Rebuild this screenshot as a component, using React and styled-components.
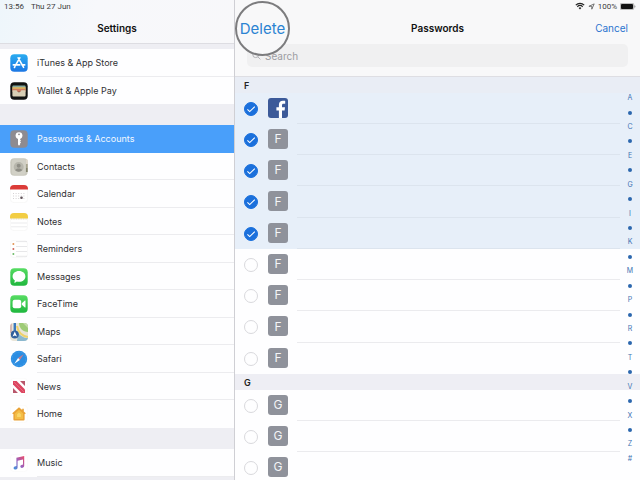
import React, { useState } from "react";
import styled, { createGlobalStyle, css } from "styled-components";

const GlobalStyle = createGlobalStyle`
  * { box-sizing: border-box; }
  body {
    margin: 0;
    font-family: Inter, "Liberation Sans", sans-serif;
    font-size: 10px;
    color: #111;
    background: #fefeff;
  }
  button, input { font: inherit; }
`;

const Screen = styled.div`
  display: grid;
  grid-template-columns: minmax(200px, 235px) 1fr;
  height: 100vh;
  overflow: hidden;
`;

const Sidebar = styled.aside`
  display: flex;
  flex-direction: column;
  min-width: 0;
  overflow: hidden;
  border-right: 1px solid #cfcfd4;
  background: #eeeef3;
`;

const SidebarHeader = styled.header`
  flex: none;
  height: 44px;
  margin-bottom: 5px;
  border-bottom: 1px solid #dddde2;
  background: linear-gradient(105deg, #eef6fb 0, #f7f8fb 40%, #f8f8fa 100%);
`;

const StatusBar = styled.div`
  display: flex;
  align-items: center;
  justify-content: ${(p) => (p.$end ? "flex-end" : "flex-start")};
  gap: ${(p) => (p.$end ? 3 : 7)}px;
  height: 12px;
  padding: 0 4px;
  font-family: Roboto, "Liberation Sans", sans-serif;
  font-size: 8px;
  color: #3c3d40;
`;

const Title = styled.h1`
  margin: 0;
  font-size: 10px;
  line-height: 32px;
  font-weight: 600;
  text-align: center;
  color: #111;
`;

const Group = styled.nav`
  display: flex;
  flex: none;
  flex-direction: column;
  margin-bottom: 21px;
  background: #fefeff;
`;

const Setting = styled.a`
  display: flex;
  align-items: center;
  gap: 9px;
  height: 27px;
  padding-left: 10px;
  font-size: 9px;
  color: ${(p) => (p.$active ? "#f4f9ff" : "#303033")};
  background: ${(p) => (p.$active ? "#499ffa" : "transparent")};
  text-decoration: none;

  &:nth-child(odd) { height: 28px; }
  svg { flex: none; }
`;

const SettingLabel = styled.span`
  flex: 1;
  align-self: stretch;
  display: flex;
  align-items: center;
  border-bottom: 1px solid ${(p) => (p.$active ? "transparent" : "#ececef")};

  ${Setting}:last-child:not(:first-child) & { border-color: transparent; }
`;

const Main = styled.main`
  display: flex;
  flex-direction: column;
  min-width: 0;
  overflow: hidden;
`;

const MainHeader = styled.header`
  flex: none;
  height: 77px;
  border-bottom: 1px solid #dedee3;
  background: #f8f8f9;
`;

const Toolbar = styled.div`
  display: grid;
  grid-template-columns: 1fr auto 1fr;
  align-items: center;
  height: 32px;
`;

const CancelButton = styled.button`
  justify-self: end;
  margin-right: 12px;
  padding: 0;
  border: 0;
  background: none;
  color: #2a74cf;
`;

const DeleteSlot = styled.div`
  position: relative;
  align-self: stretch;
`;

const DeleteButton = styled.button`
  position: absolute;
  top: -11px;
  left: 0;
  display: grid;
  place-items: center;
  width: 55px;
  height: 55px;
  padding: 0;
  border: 2px solid #7c7c7e;
  border-radius: 50%;
  background: #f8f8f9;
  color: #2b83d2;
  font-size: 15px;
`;

const SearchBox = styled.label`
  display: flex;
  align-items: center;
  gap: 4px;
  height: 23px;
  margin: 0 12px;
  padding-left: 5px;
  border-radius: 5px;
  background: #f0f0f1;
  color: #b4b4b8;
`;

const SearchInput = styled.input`
  flex: 1;
  min-width: 0;
  padding: 0;
  border: 0;
  outline: 0;
  background: none;
  color: #333;
  &::placeholder { color: #9c9ca1; opacity: 1; }
`;

const ListArea = styled.div`
  position: relative;
  flex: 1;
  min-height: 0;
  overflow: hidden;
`;

const SectionTitle = styled.h2`
  height: 16px;
  margin: 0;
  padding-left: 9px;
  font-size: 9px;
  line-height: 17px;
  font-weight: 600;
  color: #222;
  background: ${(p) => (p.$tinted ? "#e9edf5" : "#eeeef4")};
`;

const Rows = styled.ul`
  margin: 0;
  padding: 0;
  list-style: none;
`;

const Row = styled.li`
  display: flex;
  align-items: center;
  height: 31px;
  padding: 0 20px 0 9px;
  background: ${(p) => (p.$selected ? "#e7eff9" : "#fefeff")};
  &:nth-child(4n) { height: 32px; }
`;

const Check = styled.input`
  appearance: none;
  flex: none;
  width: 14px;
  height: 14px;
  margin: 0 10px 0 0;
  border: 1px solid #d9d9dd;
  border-radius: 50%;
  background: #fefeff;

  &:checked {
    border-color: #1b70dc;
    background: #1b70dc
      url("data:image/svg+xml,%3Csvg xmlns='http://www.w3.org/2000/svg' viewBox='0 0 12 12'%3E%3Cpath d='M2.4 6.4l2.3 2.2L9.8 3.6' fill='none' stroke='white' stroke-width='1.1'/%3E%3C/svg%3E")
      center / 12px no-repeat;
  }
`;

const Badge = styled.span`
  flex: none;
  display: grid;
  place-items: center;
  width: 20px;
  height: 20px;
  margin: 0 9px 2px 0;
  border-radius: 3px;
  background: #8f929b;
  color: #f4f5f7;
  font-size: 12px;
`;

const FacebookBadge = styled.svg`
  flex: none;
  width: 20px;
  height: 20px;
  margin: 0 9px 2px 0;
`;

const Line = styled.span`
  flex: 1;
  align-self: stretch;
  border-bottom: 1px solid ${(p) => (p.$selected ? "#dce4ee" : "#ebebee")};

  ${Row}:last-child & { border-color: transparent; }
`;

const IndexBar = styled.nav`
  position: absolute;
  top: 14px;
  right: 4px;
  display: grid;
  grid-auto-rows: 1fr;
  width: 12px;
  height: 375px;
`;

const IndexLink = styled.a`
  display: grid;
  place-items: center;
  color: #3f73b3;
  font-size: 7px;
  line-height: 8px;
  text-decoration: none;
  ${(p) =>
    p.$dot &&
    css`
      &::before {
        content: "";
        width: 4px;
        height: 4px;
        border-radius: 50%;
        background: #2c67ae;
      }
    `}
`;

const Icon = ({ children }) => (
  <svg width="18" height="18" viewBox="0 0 18 18" aria-hidden="true">
    {children}
  </svg>
);

const Tile = ({ fill, stroke }) => (
  <rect x="0.3" y="0.3" width="17.4" height="17.4" rx="4" fill={fill} stroke={stroke} strokeWidth="0.5" />
);

const GreenTile = ({ id }) => (
  <>
    <defs>
      <linearGradient id={id} x2="0" y2="1">
        <stop stopColor="#57dc63" />
        <stop offset="1" stopColor="#1fb73e" />
      </linearGradient>
    </defs>
    <Tile fill={`url(#${id})`} />
  </>
);

const icons = {
  store: (
    <Icon>
      <defs>
        <linearGradient id="store-blue" x2="0" y2="1">
          <stop stopColor="#29abf0" />
          <stop offset="1" stopColor="#1d77e4" />
        </linearGradient>
      </defs>
      <Tile fill="url(#store-blue)" />
      <path d="M9.8 3.8 5.3 11.6M8.2 3.8l5.4 9.6M3.3 10.9h6.4M12 10.9h2.7M4.9 12.6l-.5.9" stroke="#fff" strokeWidth="1.6" strokeLinecap="round" fill="none" />
    </Icon>
  ),
  wallet: (
    <Icon>
      <Tile fill="#111211" />
      <rect x="2.4" y="3.4" width="13.2" height="4" rx="1" fill="#86a99e" />
      <rect x="2.4" y="5.2" width="13.2" height="3" fill="#dfb65d" />
      <rect x="2.4" y="6.8" width="13.2" height="3" fill="#cf7c61" />
      <path d="M2.4 8.2h4c.6 0 .8 2 2.6 2s2-2 2.6-2h4v5.2a1 1 0 0 1-1 1H3.4a1 1 0 0 1-1-1z" fill="#d8cfb5" />
    </Icon>
  ),
  key: (
    <Icon>
      <Tile fill="#8e8b90" />
      <circle cx="9" cy="5.6" r="3.4" fill="#fff" />
      <circle cx="9" cy="4.3" r="0.9" fill="#8e8b90" />
      <path d="M8 8h2.1v1.5l.9.9-.9 1 .9 1-.9 1v1.2L9 15.8l-1-1.2z" fill="#fff" />
    </Icon>
  ),
  contacts: (
    <Icon>
      <Tile fill="#c9c8bd" />
      <path d="M15.7 1.2h1a1 1 0 0 1 1 1V6h-2z" fill="#ded7ca" />
      <path d="M15.9 6h1.8v4h-1.8z" fill="#a7a48e" />
      <path d="M15.9 10h1.8v4h-1.8z" fill="#84846e" />
      <rect x="2" y="1.2" width="13.6" height="15.6" rx="2" fill="#d1d0c6" />
      <circle cx="8.7" cy="9" r="5" fill="#b7b6ac" />
      <circle cx="8.7" cy="7.7" r="2" fill="#8f8e86" />
      <path d="M5.2 12.1c.8-2.1 6.2-2.1 7 0-1.7 2.1-5.3 2.1-7 0" fill="#8f8e86" />
    </Icon>
  ),
  calendar: (
    <Icon>
      <Tile fill="#fff" stroke="#eee" />
      <path d="M0 4.4V4a4 4 0 0 1 4-4h10a4 4 0 0 1 4 4v.4z" fill="#db3b38" />
      <path d="M3 8.5h12M3 11h12M3 13.5h12" stroke="#c9c5c8" strokeWidth=".8" strokeDasharray="1 1.6" />
      <circle cx="11.5" cy="12.7" r="1.3" fill="#62545b" />
    </Icon>
  ),
  notes: (
    <Icon>
      <Tile fill="#fff" stroke="#eee" />
      <path d="M0 5.4V4a4 4 0 0 1 4-4h10a4 4 0 0 1 4 4v1.4z" fill="#f2cd43" />
      <path d="M1 6h16" stroke="#c5b98c" strokeWidth=".5" strokeDasharray="1 .7" />
      <path d="M1 10h16M1 13.8h16" stroke="#e3e3e5" strokeWidth=".7" />
    </Icon>
  ),
  reminders: (
    <Icon>
      <Tile fill="#fff" stroke="#f0f0f0" />
      <circle cx="3.4" cy="4" r="1" fill="#e19556" />
      <circle cx="3.4" cy="9" r="1" fill="#ce665d" />
      <circle cx="3.4" cy="14" r="1" fill="#6dbb69" />
      <path d="M6 1.6h11M6 6.5h11M6 11.5h11M6 16.3h11" stroke="#dcdcdf" strokeWidth=".7" />
    </Icon>
  ),
  messages: (
    <Icon>
      <GreenTile id="messages-green" />
      <path d="M9 3.1c3.7 0 6.4 2.4 6.4 5.3s-2.7 5.3-6.4 5.3c-.8 0-1.5-.1-2.2-.3-.8.8-1.8 1.2-2.9 1.2.6-.6 1-1.3 1-2.1-1.4-1-2.3-2.4-2.3-4.1 0-2.9 2.7-5.3 6.4-5.3" fill="#fff" />
    </Icon>
  ),
  facetime: (
    <Icon>
      <GreenTile id="facetime-green" />
      <rect x="2.6" y="4.8" width="8.6" height="8.4" rx="2" fill="#fff" />
      <path d="m11.8 8.2 3.1-2.7c.3-.2.6-.1.6.3v6.4c0 .4-.3.5-.6.3l-3.1-2.7z" fill="#fff" />
    </Icon>
  ),
  maps: (
    <Icon>
      <clipPath id="maps-tile"><rect width="18" height="18" rx="4" /></clipPath>
      <g clipPath="url(#maps-tile)">
        <path d="M0 0h18v18H0z" fill="#e9e5d8" />
        <path d="M9 0h9v9c-5 0-9-4-9-9" fill="#9ecb76" />
        <path d="M13 0h5v5z" fill="#c8dcac" />
        <path d="M8 9c2 4 6 6 10 6v3H7z" fill="#8bb8cf" />
        <path d="M7 3c1 6 5 10 11 11" stroke="#eed26b" strokeWidth="2" fill="none" />
        <path d="M0 0h2v10H0z" fill="#d5b9b5" />
        <path d="M4.8 0v10" stroke="#3978bd" strokeWidth="2.4" />
        <circle cx="4.8" cy="11.5" r="4" fill="#315f9b" />
        <path d="m4.8 8.5 2.2 5-2.2-1-2.2 1z" fill="#fff" />
      </g>
    </Icon>
  ),
  safari: (
    <Icon>
      <circle cx="9" cy="9" r="8.2" fill="#2b8de2" />
      <circle cx="9" cy="9" r="6.9" fill="none" stroke="#63b3f0" strokeWidth=".8" strokeDasharray=".5 1" />
      <path d="m13.7 4.3-3.8 5.6-1.8-1.8z" fill="#c97b8c" />
      <path d="m4.3 13.7 3.8-5.6 1.8 1.8z" fill="#fff" />
    </Icon>
  ),
  news: (
    <Icon>
      <Tile fill="#fff" stroke="#f6f6f6" />
      <path d="M3 3h3.6L15 11.5V15h-3.5L3 6.5z" fill="#dc4560" />
      <path d="M10 3h5v5zM3 10v5h5z" fill="#b8566b" />
      <path d="m4 4 10 10" stroke="#e7778a" strokeWidth=".7" />
    </Icon>
  ),
  home: (
    <Icon>
      <Tile fill="#fff" stroke="#f6f6f6" />
      <path d="M9 2.3 12.2 5V3.7h1.6v2.7L15.5 8v1h-.9v5.4a1 1 0 0 1-1 1H4.4a1 1 0 0 1-1-1V9h-.9V8z" fill="#e9a236" />
      <path d="m9 4.8 4.2 3.6V14H4.8V8.4z" fill="#f4bd45" />
      <path d="m9 7.6 1.9 1.7V12H7.1V9.3z" fill="#f9d668" />
    </Icon>
  ),
  music: (
    <Icon>
      <defs>
        <linearGradient id="music-note" x1="1" x2="0" y2="1">
          <stop stopColor="#ed4867" />
          <stop offset=".5" stopColor="#9a61bd" />
          <stop offset="1" stopColor="#3a96df" />
        </linearGradient>
      </defs>
      <Tile fill="#fff" stroke="#f6f6f6" />
      <path d="M6.4 3.8 14.2 2v9.8c0 2.4-3.9 2.9-3.9.7 0-1.7 2-1.5 2.7-2V5.6L7.6 6.8v6.6c0 2.6-4 2.9-4 .7 0-1.8 2.1-1.5 2.8-2z" fill="url(#music-note)" />
    </Icon>
  ),
};

const groups = [
  [["store", "iTunes & App Store"], ["wallet", "Wallet & Apple Pay"]],
  [
    ["key", "Passwords & Accounts"],
    ["contacts", "Contacts"],
    ["calendar", "Calendar"],
    ["notes", "Notes"],
    ["reminders", "Reminders"],
    ["messages", "Messages"],
    ["facetime", "FaceTime"],
    ["maps", "Maps"],
    ["safari", "Safari"],
    ["news", "News"],
    ["home", "Home"],
  ],
  [["music", "Music"]],
];

const sections = [
  { letter: "F", count: 9, selected: 5 },
  { letter: "G", count: 3, selected: 0 },
];

const indexMarks = [..."A•C•E•G•I•K•M•P•R•T•V•X•Z#"];

function PasswordRow({ letter, position, initial }) {
  const [selected, setSelected] = useState(initial);
  const facebook = letter === "F" && position === 1;
  return (
    <Row $selected={selected}>
      <Check
        type="checkbox"
        aria-label={`Select ${letter} account ${position}`}
        checked={selected}
        onChange={(e) => setSelected(e.target.checked)}
      />
      {facebook ? (
        <FacebookBadge viewBox="0 0 20 20" aria-label="Facebook">
          <rect width="20" height="20" rx="3" fill="#3c5a99" />
          <path d="M10.9 20v-7.6H8.4V9.3h2.5V7c0-2.8 1.6-4.2 4-4.2 1.1 0 2 .1 2.3.1v2.8h-1.6c-1.3 0-1.6.6-1.6 1.6v2h3l-.4 3.1H14V20z" fill="#fff" />
        </FacebookBadge>
      ) : (
        <Badge>{letter}</Badge>
      )}
      <Line $selected={selected} />
    </Row>
  );
}

export default function App() {
  return (
    <>
      <GlobalStyle />
      <Screen>
        <Sidebar>
          <SidebarHeader>
            <StatusBar><span>13:56</span><span>Thu 27 Jun</span></StatusBar>
            <Title>Settings</Title>
          </SidebarHeader>
          {groups.map((items) => (
            <Group key={items[0][0]}>
              {items.map(([icon, label]) => (
                <Setting key={icon} href={`#${icon}`} $active={icon === "key"}>
                  {icons[icon]}
                  <SettingLabel $active={icon === "key"}>{label}</SettingLabel>
                </Setting>
              ))}
            </Group>
          ))}
        </Sidebar>
        <Main>
          <MainHeader>
            <StatusBar $end>
              <svg width="10" height="8" viewBox="0 0 10 8" aria-label="Wi-Fi">
                <path d="M.8 3.1a6 6 0 0 1 8.4 0M2.3 4.7a3.9 3.9 0 0 1 5.4 0" stroke="#222" strokeWidth="1.2" fill="none" />
                <path d="M3.6 6a2 2 0 0 1 2.8 0L5 7.5z" fill="#222" />
              </svg>
              <svg width="7" height="7" viewBox="0 0 7 7" aria-label="Location">
                <path d="M6.2.9 3.8 6.2V3.3H.9z" fill="none" stroke="#444" strokeWidth=".7" />
              </svg>
              <span>100%</span>
              <svg width="16" height="7" viewBox="0 0 16 7" aria-label="Battery">
                <rect x=".3" y=".3" width="13.4" height="6.4" rx="1.4" fill="#fff" stroke="#777" strokeWidth=".6" />
                <rect x="1" y="1" width="12" height="5" rx=".8" fill="#111" />
                <path d="M14.5 2.3c1.2.4 1.2 2 0 2.4z" fill="#777" />
              </svg>
            </StatusBar>
            <Toolbar>
              <DeleteSlot><DeleteButton type="button">Delete</DeleteButton></DeleteSlot>
              <Title>Passwords</Title>
              <CancelButton type="button">Cancel</CancelButton>
            </Toolbar>
            <SearchBox>
              <svg width="9" height="9" viewBox="0 0 9 9" aria-hidden="true">
                <circle cx="3.7" cy="3.7" r="2.9" fill="none" stroke="currentColor" />
                <path d="m5.9 5.9 2.5 2.5" stroke="currentColor" />
              </svg>
              <SearchInput type="search" placeholder="Search" aria-label="Search" />
            </SearchBox>
          </MainHeader>
          <ListArea>
            {sections.map(({ letter, count, selected }) => (
              <section key={letter}>
                <SectionTitle $tinted={selected > 0}>{letter}</SectionTitle>
                <Rows>
                  {Array.from({ length: count }, (_, i) => (
                    <PasswordRow key={i} letter={letter} position={i + 1} initial={i < selected} />
                  ))}
                </Rows>
              </section>
            ))}
            <IndexBar aria-label="Alphabet index">
              {indexMarks.map((mark, i) => (
                <IndexLink
                  key={i}
                  href={`#index-${i}`}
                  $dot={mark === "•"}
                  aria-label={mark === "•" ? "Letters between" : undefined}
                >
                  {mark === "•" ? null : mark}
                </IndexLink>
              ))}
            </IndexBar>
          </ListArea>
        </Main>
      </Screen>
    </>
  );
}
